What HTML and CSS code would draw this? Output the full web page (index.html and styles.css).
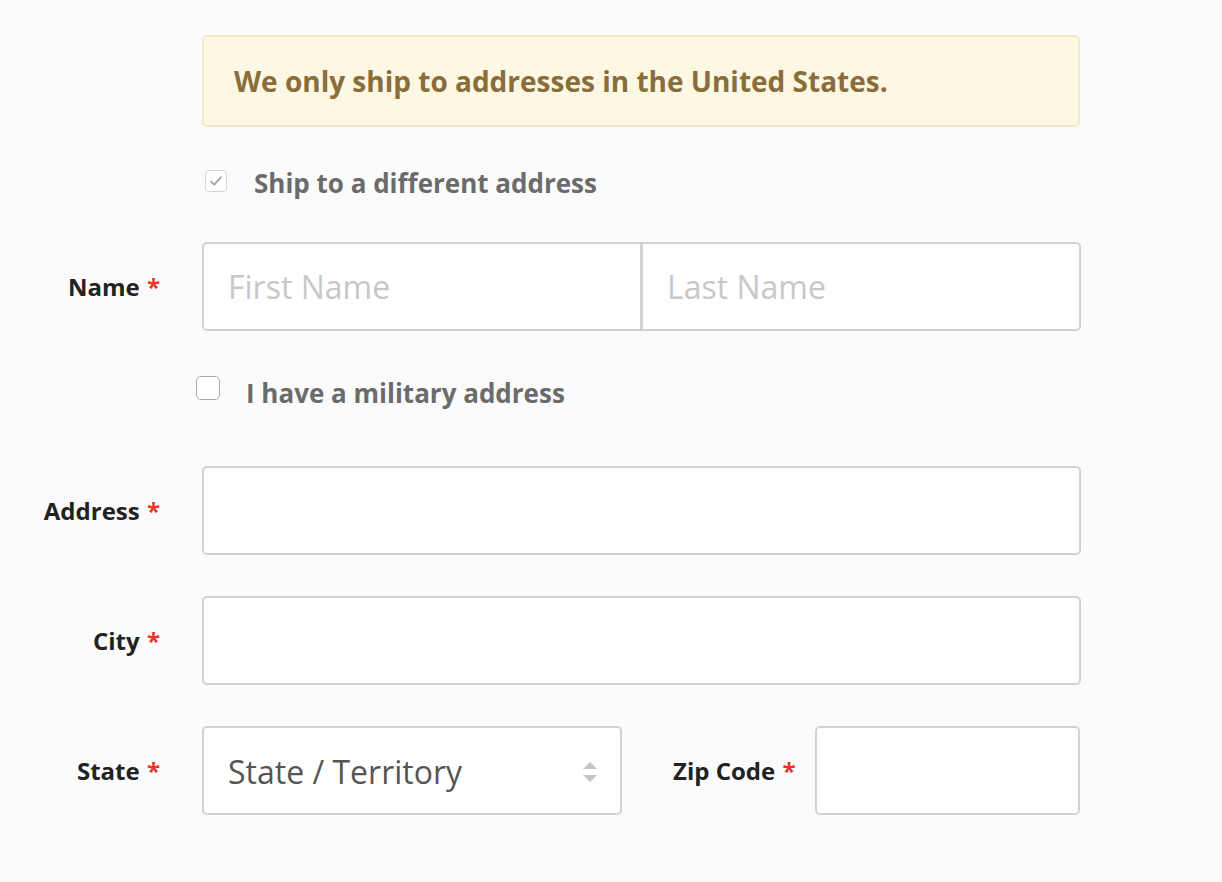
FILE: index.html
```html
<!DOCTYPE html>
<html lang="en">
<head>
<meta charset="utf-8">
<title>Shipping address</title>
<link rel="stylesheet" href="styles.css">
</head>
<body>
<form class="form">
  <div class="row">
    <div class="label"></div>
    <div class="alert">We only ship to addresses in the United States.</div>
  </div>

  <div class="row row-check row-ship">
    <div class="label"></div>
    <label class="check">
      <span class="box box-checked">
        <svg width="14" height="12" viewBox="0 0 14 12"><path d="M2 6.5 L5.3 9.8 L12 2" fill="none" stroke="#9a9a9a" stroke-width="1.6" stroke-linecap="round" stroke-linejoin="round"/></svg>
      </span>
      <span class="check-text check-text-ship">Ship to a different address</span>
    </label>
  </div>

  <div class="row row-name">
    <div class="label">Name <span class="req">*</span></div>
    <div class="pair">
      <input class="input input-first" type="text" placeholder="First Name">
      <input class="input input-last" type="text" placeholder="Last Name">
    </div>
  </div>

  <div class="row row-check row-military">
    <div class="label"></div>
    <label class="check check-military">
      <span class="box box-empty"></span>
      <span class="check-text check-text-military">I have a military address</span>
    </label>
  </div>

  <div class="row row-address">
    <div class="label">Address <span class="req">*</span></div>
    <input class="input" type="text">
  </div>

  <div class="row row-city">
    <div class="label">City <span class="req">*</span></div>
    <input class="input" type="text">
  </div>

  <div class="row row-state">
    <div class="label">State <span class="req">*</span></div>
    <div class="state-zip">
      <div class="select">
        <span class="select-text">State / Territory</span>
        <svg class="arrows" width="16" height="24" viewBox="0 0 16 24"><path d="M8 2 L15 9 L1 9 Z" fill="#c4c4c4"/><path d="M1 15 L15 15 L8 22 Z" fill="#c4c4c4"/></svg>
      </div>
      <div class="label label-zip">Zip Code <span class="req">*</span></div>
      <input class="input input-zip" type="text">
    </div>
  </div>
</form>
</body>
</html>
```

FILE: styles.css
```css
html, body {
  margin: 0;
  padding: 0;
  background: #fbfbfb;
}

body {
  font-family: "Open Sans", "Noto Sans", "Liberation Sans", sans-serif;
}

.form {
  width: 1081px;
  padding-top: 35px;
}

.row {
  display: grid;
  grid-template-columns: 160px 1fr;
  column-gap: 42px;
  align-items: center;
}

.label {
  text-align: right;
  font-size: 24px;
  font-weight: 700;
  color: #222;
  white-space: nowrap;
}

.req {
  color: #e8342a;
  margin-left: 1px;
}

.alert {
  box-sizing: border-box;
  height: 92px;
  width: 878px;
  background: #fcf8e3;
  border: 2px solid #f6e8c6;
  border-radius: 5px;
  padding-left: 30px;
  display: flex;
  align-items: center;
  font-size: 28px;
  font-weight: 700;
  color: #8a6d3b;
}

.row-ship {
  margin-top: 36px;
}

.row-name {
  margin-top: 43px;
}

.row-military {
  margin-top: 39px;
}

.row-address {
  margin-top: 60px;
}

.row-city,
.row-state {
  margin-top: 41px;
}

.check {
  display: flex;
  align-items: center;
  height: 36px;
  margin-left: 3px;
}

.check-military {
  margin-left: -6px;
}

.box {
  box-sizing: border-box;
  display: flex;
  align-items: center;
  justify-content: center;
  background: #fff;
  flex: none;
}

.box-checked {
  width: 22px;
  height: 22px;
  border: 1px solid #d4d4d4;
  border-radius: 4px;
  margin-right: 27px;
}

.box-empty {
  width: 24px;
  height: 24px;
  border: 1px solid #a8a8a8;
  border-radius: 5px;
  margin-right: 26px;
}

.check-text {
  font-size: 26px;
  font-weight: 700;
  color: #6b6b6b;
}

.check-text-ship {
  padding-top: 3px;
}

.check-text-military {
  padding-top: 9px;
}

.input {
  box-sizing: border-box;
  height: 89px;
  width: 879px;
  margin: 0;
  padding: 0 24px;
  background: #fff;
  border: 2px solid #d2d2d2;
  border-radius: 5px;
  font-family: inherit;
  font-size: 32px;
  color: #555;
  outline: none;
}

.input::placeholder {
  color: #c8c8c8;
}

.pair {
  display: flex;
}

.pair .input {
  width: 440px;
}

.input-first {
  border-top-right-radius: 0;
  border-bottom-right-radius: 0;
}

.input-last {
  margin-left: -1px;
  border-top-left-radius: 0;
  border-bottom-left-radius: 0;
}

.state-zip {
  display: flex;
  align-items: center;
}

.select {
  box-sizing: border-box;
  flex: none;
  width: 420px;
  height: 89px;
  background: #fff;
  border: 2px solid #d2d2d2;
  border-radius: 5px;
  padding: 0 24px;
  display: flex;
  align-items: center;
  justify-content: space-between;
}

.select-text {
  font-size: 32px;
  color: #555;
  padding-top: 2px;
}

.arrows {
  margin-right: -2px;
  margin-top: 2px;
}

.label-zip {
  flex: none;
  margin-left: 51px;
  width: 121px;
}

.input-zip {
  flex: none;
  width: 265px;
  margin-left: 21px;
}
```
